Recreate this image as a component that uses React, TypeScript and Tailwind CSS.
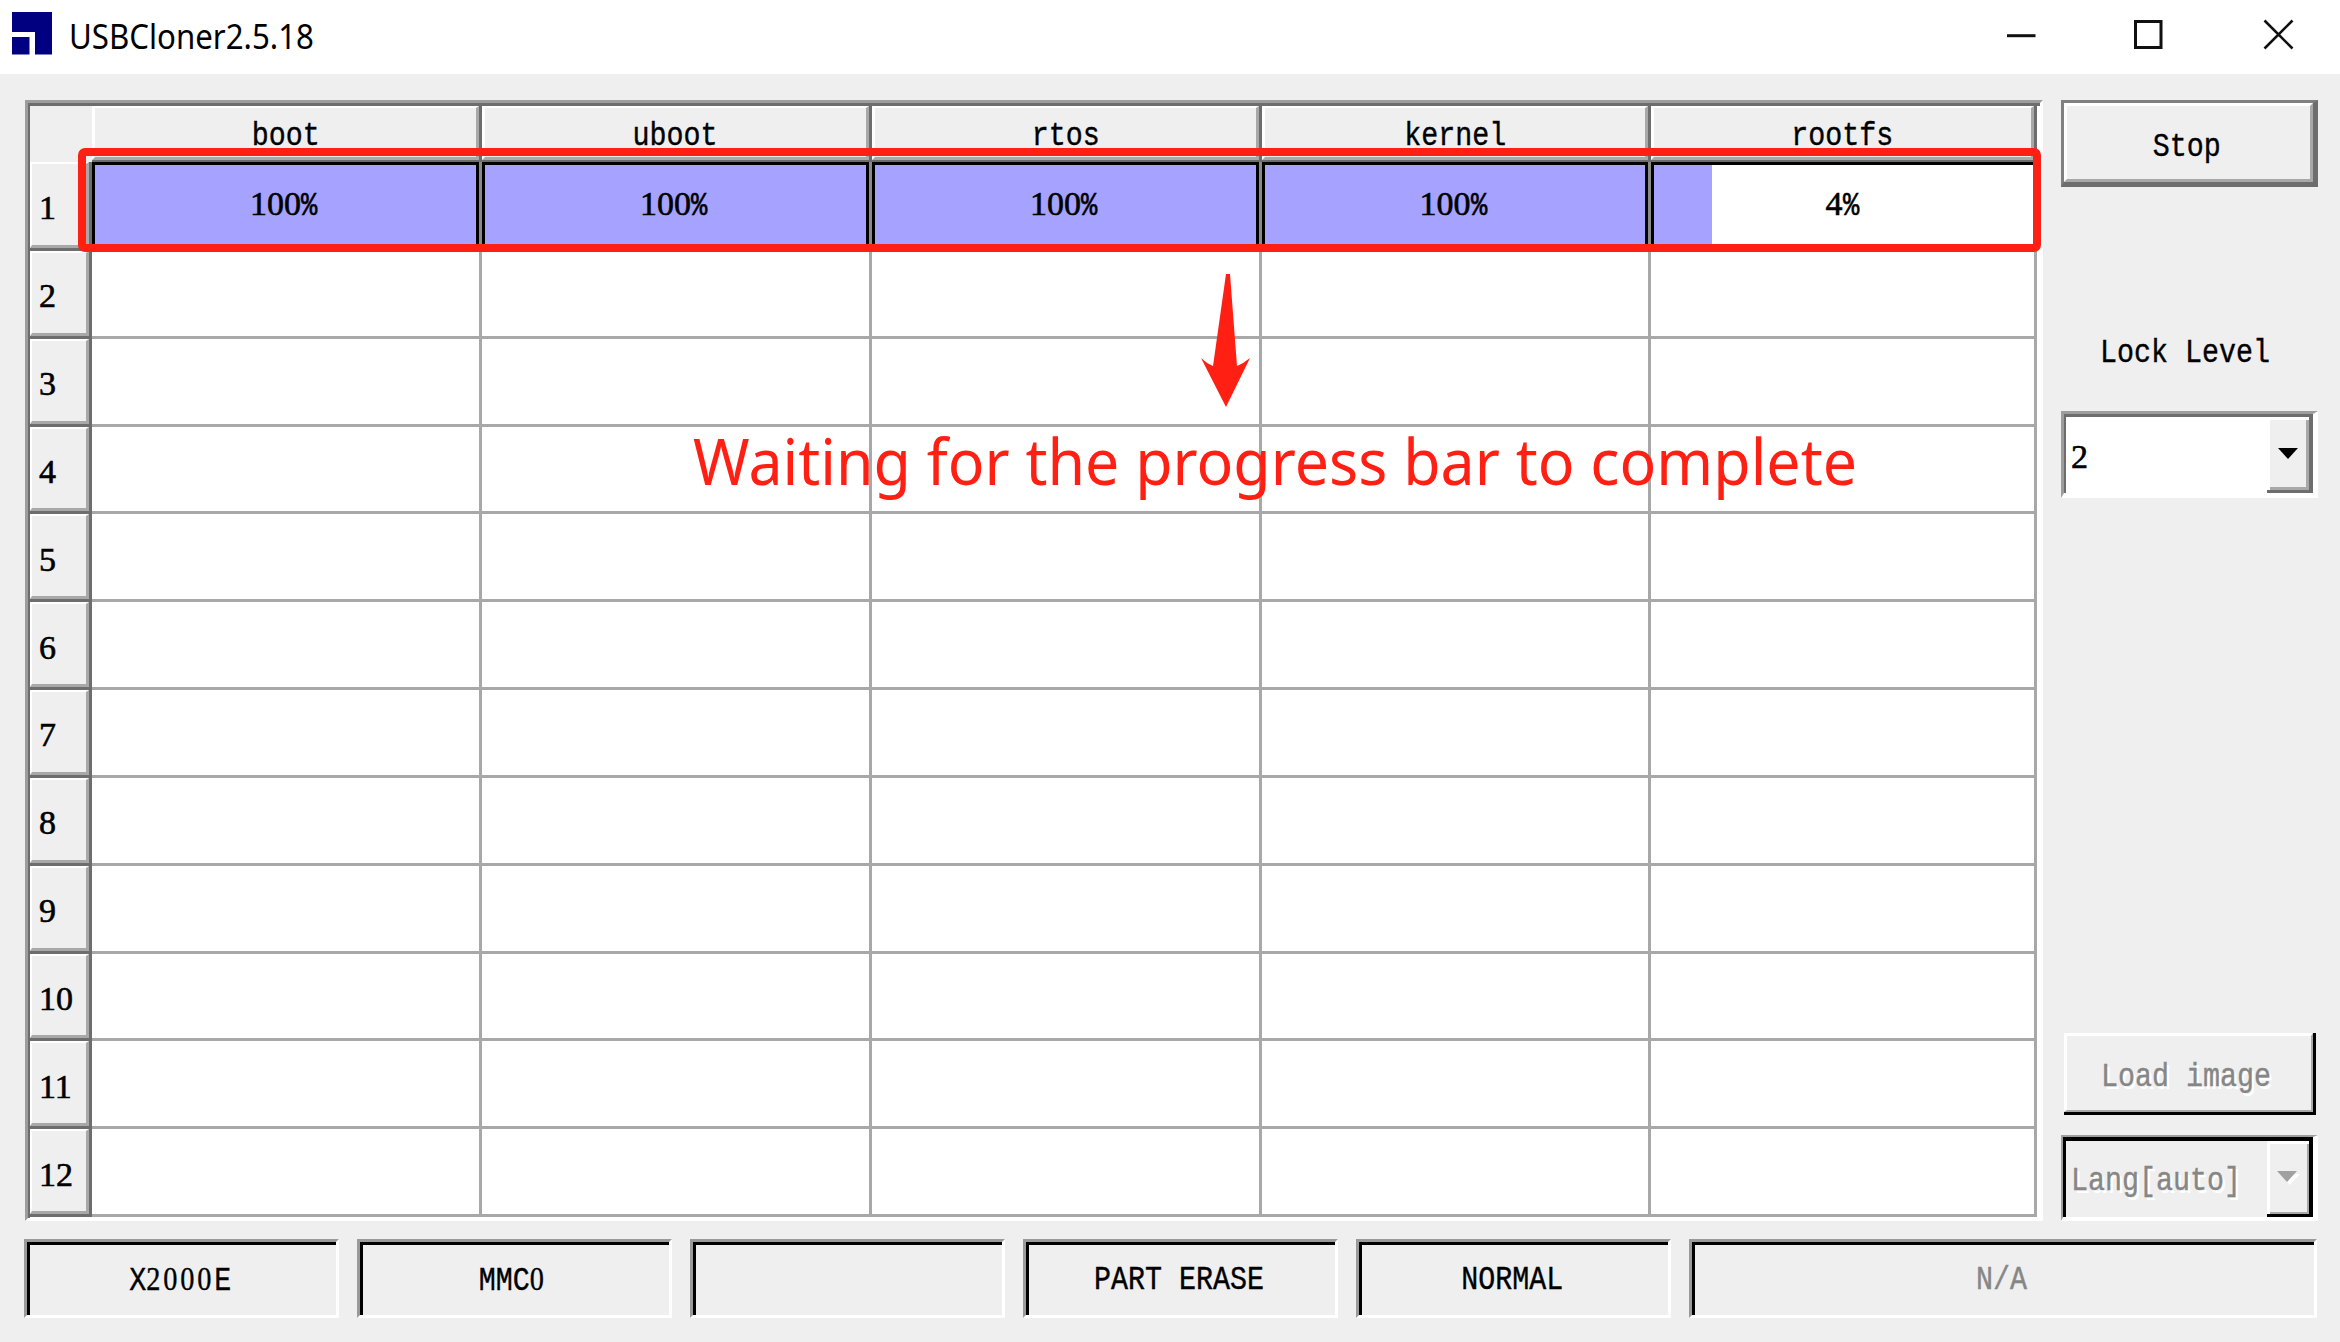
import React from "react";

const columns = [
  { name: "boot", progress: 100, fill: 100 },
  { name: "uboot", progress: 100, fill: 100 },
  { name: "rtos", progress: 100, fill: 100 },
  { name: "kernel", progress: 100, fill: 100 },
  { name: "rootfs", progress: 4, fill: 15.3 },
];
const rows = [2, 3, 4, 5, 6, 7, 8, 9, 10, 11, 12];

/* Condensed fixed-pitch text; digits use the serif face, whose advance equals the same 17px pitch. */
function Bitmap({ text, className = "" }: { text: string; className?: string }) {
  const numeric = /^[\d%]+$/.test(text);
  if (numeric) {
    return (
      <span className={`font-['Liberation_Serif',serif] text-[34px] leading-none whitespace-pre [-webkit-text-stroke:0.6px_currentColor] ${className}`}>
        {text.replace("%", "")}
        {text.endsWith("%") && (
          <span className="inline-block w-[17px] origin-left scale-x-[0.8] font-['Liberation_Mono',monospace]">%</span>
        )}
      </span>
    );
  }
  return (
    <span className={`inline-block w-max scale-x-[0.833] font-['Liberation_Mono',monospace] text-[34px] leading-none whitespace-pre [-webkit-text-stroke:0.4px_currentColor] ${className}`}>
      {text.split(/(\d+)/).map((part, i) =>
        /\d/.test(part) ? (
          <span key={i} className="font-['Liberation_Serif',serif] tracking-[3.4px]">{part}</span>
        ) : (
          part
        ),
      )}
    </span>
  );
}

function RowHeader({ n }: { n: number }) {
  return (
    <div className="border-r-[3px] border-b-[3px] border-[#6d6d6d]">
      <div className="flex h-full items-center border-t-2 border-r-[3px] border-b-[3px] border-l-2 border-t-white border-r-[#a8a8a8] border-b-[#a8a8a8] border-l-white bg-[#efefef] pt-[7px] pl-[7px]">
        <Bitmap text={String(n)} />
      </div>
    </div>
  );
}

function Status({ text, muted = false, className }: { text: string; muted?: boolean; className: string }) {
  return (
    <div className={`shrink-0 border-t-[3px] border-r-[3px] border-b-[3px] border-l-[3px] border-t-[#9a9a9a] border-r-white border-b-white border-l-[#9a9a9a] ${className}`}>
      <div className="flex h-full items-center justify-center border-t-[3px] border-l-[3px] border-black pr-[6px] pb-px">
        <Bitmap text={text} className={muted ? "text-[#868686]" : ""} />
      </div>
    </div>
  );
}

export default function App() {
  return (
    <div className="relative flex h-[1342px] w-[2340px] flex-col overflow-hidden bg-[#efefef] text-black">
      <header className="flex h-[74px] shrink-0 items-start bg-white">
        <svg className="mt-3 ml-3 h-[43px] w-10" viewBox="0 0 40 43" fill="#000080">
          <path d="M0 0H40V42.5H23V20H0Z" />
          <path d="M0 25H17.5V42.5H0Z" />
        </svg>
        <h1 className="mt-[11px] ml-[17px] w-[250px] origin-left scale-x-[0.892] font-['Noto_Sans',sans-serif] text-[35px] leading-[50px] whitespace-nowrap">
          USBCloner2.5.18
        </h1>
        <svg className="ml-auto h-[74px] w-[340px]" viewBox="2000 0 340 74" fill="none" stroke="#111" strokeWidth="3">
          <path d="M2007 35.7H2035.5" />
          <path d="M2135.5 21.5H2161V47.5H2135.5Z" />
          <path d="M2264.5 20.5L2292.5 48.5M2292.5 20.5L2264.5 48.5" strokeWidth="2.6" />
        </svg>
      </header>

      <main className="flex h-[1147px] shrink-0 pt-[26px] pl-[25px]">
        <div className="h-[1121px] w-[2018px] border-t-[3px] border-r-[3px] border-b-[3px] border-l-[3px] border-t-[#9d9d9d] border-r-white border-b-white border-l-[#9d9d9d]">
          <div className="relative h-[1115px] border-t-[3px] border-l-2 border-[#6d6d6d] bg-white pr-[3px]">
            <div className="grid h-[1111px] grid-cols-[62px_390px_390px_390px_389px_1fr] grid-rows-[56px_89px_repeat(11,1fr)]">
              <div className="bg-[#efefef]" />
              {columns.map((c) => (
                <div key={c.name} className="border-r-[3px] border-b-2 border-[#6d6d6d]">
                  <div className="flex h-full justify-center border-t-2 border-r-[3px] border-b-[3px] border-l-[3px] border-t-white border-r-[#a8a8a8] border-b-[#a8a8a8] border-l-white bg-[#efefef] pt-[11px]">
                    <Bitmap text={c.name} />
                  </div>
                </div>
              ))}
              <RowHeader n={1} />
              {columns.map((c) => (
                <div key={c.name} className="border-r-[3px] border-b-[3px] border-[#8a8a8a]">
                  <div className={`relative h-full border-t-[3px] border-l-[3px] border-black ${c.progress === 100 ? "border-r-[3px]" : ""}`}>
                    <div className="h-full bg-[#a5a3ff]" style={{ width: `${c.fill}%` }} />
                    <div className="absolute inset-0 flex items-center justify-center pr-[3px] pb-1">
                      <Bitmap text={`${c.progress}%`} />
                    </div>
                  </div>
                </div>
              ))}
              {rows.map((r) => (
                <React.Fragment key={r}>
                  <RowHeader n={r} />
                  {columns.map((c) => (
                    <div key={c.name} className="border-r-[3px] border-b-[3px] border-[#a8a8a8] bg-white" />
                  ))}
                </React.Fragment>
              ))}
            </div>
            <div className="absolute top-[42px] left-[48px] h-[104px] w-[1963px] rounded-[7px] border-8 border-[#ff2013]" />
            <svg className="absolute top-[168px] left-[1171px] h-[134px] w-[54px]" viewBox="0 0 54 134" fill="#ff2013">
              <path d="M25 0H29L36 92Q43 89 49 84L25 133L0 84Q5 89 12 92Z" />
            </svg>
            <p className="absolute top-[320px] left-[663px] w-max origin-left scale-x-[0.966] font-['Noto_Sans',sans-serif] text-[63px] leading-[70px] whitespace-nowrap text-[#ff2013]">
              Waiting for the progress bar to complete
            </p>
          </div>
        </div>

        <aside className="ml-[18px] flex w-[257px] flex-col">
          <button className="h-[87px] border-t-[3px] border-r-[5px] border-b-[5px] border-l-[3px] border-t-[#808080] border-r-[#6d6d6d] border-b-[#6d6d6d] border-l-[#808080]">
            <span className="flex h-full items-center justify-center border-t-[3px] border-r-[3px] border-b-[3px] border-l-[3px] border-t-white border-r-[#a8a8a8] border-b-[#a8a8a8] border-l-white pt-2 pr-1">
              <Bitmap text="Stop" />
            </span>
          </button>
          <div className="mt-[149px] flex h-10 justify-center pr-2">
            <Bitmap text="Lock Level" />
          </div>
          <div className="mt-[35px] h-[87px] border-t-[3px] border-r-[5px] border-b-[5px] border-l-[3px] border-t-[#9d9d9d] border-r-white border-b-white border-l-[#9d9d9d]">
            <div className="flex h-full border-t-[3px] border-l-[2px] border-[#6d6d6d] bg-white">
              <div className="flex flex-1 items-center pt-1 pl-[5px]">
                <Bitmap text="2" />
              </div>
              <div className="flex w-[46px] items-center justify-center border-r-[4px] border-b-[3px] border-[#6d6d6d] bg-[#efefef] shadow-[inset_3px_3px_0_#fff,inset_-3px_-3px_0_#a8a8a8]">
                <svg className="h-[11px] w-5" viewBox="0 0 20 11"><path d="M0 0H20L10 11Z" /></svg>
              </div>
            </div>
          </div>
          <button disabled className="mt-auto ml-[3px] h-[82px] w-[252px] border-r-[3px] border-b-[3px] border-black text-[#868686]">
            <span className="flex h-full items-center justify-center border-t-[3px] border-r-[2px] border-b-[2px] border-l-[3px] border-t-white border-r-[#a8a8a8] border-b-[#a8a8a8] border-l-white pt-[7px] pr-[5px] [text-shadow:3px_3px_0_#fff]">
              <Bitmap text="Load image" />
            </span>
          </button>
          <div className="mt-[20px] h-[86px] border-t-[2px] border-r-[5px] border-b-[4px] border-l-[2px] border-t-[#9d9d9d] border-r-white border-b-white border-l-[#9d9d9d]">
            <div className="flex h-full border-t-[4px] border-l-[3px] border-black bg-[#efefef]">
              <div className="flex flex-1 items-center pt-1 pl-[5px] text-[#868686]">
                <Bitmap text="Lang[auto]" className="-mr-10 origin-left [text-shadow:3px_3px_0_#fff]" />
              </div>
              <div className="flex w-[46px] items-center justify-center border-r-[4px] border-b-[3px] border-black shadow-[inset_3px_3px_0_#fff,inset_-2px_-2px_0_#a8a8a8]">
                <svg className="h-[14px] w-[23px]" viewBox="0 0 23 14"><path d="M3 3H23L13 14Z" fill="#fff" /><path d="M0 0H20L10 11Z" fill="#a0a0a0" /></svg>
              </div>
            </div>
          </div>
        </aside>
      </main>

      <footer className="mt-[18px] ml-[24px] flex h-[79px] gap-[18px]">
        <Status text="X2000E" className="w-[315px]" />
        <Status text="MMC0" className="w-[315px]" />
        <Status text="" className="w-[315px]" />
        <Status text="PART ERASE" className="w-[315px]" />
        <Status text="NORMAL" className="w-[315px]" />
        <Status text="N/A" muted className="w-[628px]" />
      </footer>
    </div>
  );
}
